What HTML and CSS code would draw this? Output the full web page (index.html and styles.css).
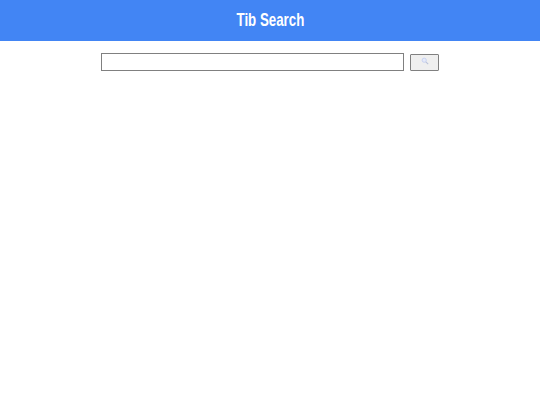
FILE: index.html
```html
<!DOCTYPE html>
<html lang="en">
<head>
    <meta charset="UTF-8">
    <title>Tib Search</title>
    <link rel="stylesheet" href="styles.css">
</head>
<body>
    <header class="header">
        <h1 class="title">Tib Search</h1>
    </header>
    <form class="search-form">
        <input type="text" class="search-input">
        <button type="button" class="search-button">
            <svg class="search-icon" viewBox="0 0 10 10" aria-hidden="true">
                <circle cx="4" cy="4" r="2.6" fill="#e6eaf8" stroke="#c6d0f0" stroke-width="1.2"></circle>
                <line x1="6" y1="6" x2="9" y2="9" stroke="#b9c2da" stroke-width="1.4"></line>
            </svg>
        </button>
    </form>
</body>
</html>
```

FILE: styles.css
```css
body {
    font-family: "Liberation Sans", Arial, sans-serif;
    margin: 0;
    padding: 0;
    background: #ffffff;
}
.header {
    box-sizing: border-box;
    background: #4285f4;
    height: 41px;
    padding-bottom: 1px;
    display: flex;
    justify-content: center;
    align-items: center;
}
.title {
    margin: 0;
    color: #ffffff;
    font-size: 19px;
    font-weight: bold;
    transform: scaleX(0.7);
}
.search-form {
    display: flex;
    justify-content: center;
    align-items: center;
    gap: 6px;
    margin-top: 12px;
}
.search-input {
    box-sizing: border-box;
    width: 303px;
    height: 18px;
    padding: 0 2px;
    border: 1px solid #808080;
    background: #ffffff;
}
.search-button {
    box-sizing: border-box;
    width: 29px;
    height: 17px;
    padding: 0;
    border: 1px solid #808080;
    border-radius: 1px;
    background: #efefef;
    display: flex;
    justify-content: center;
    align-items: center;
}
.search-icon {
    width: 8px;
    height: 8px;
    margin-bottom: 2px;
}
```
